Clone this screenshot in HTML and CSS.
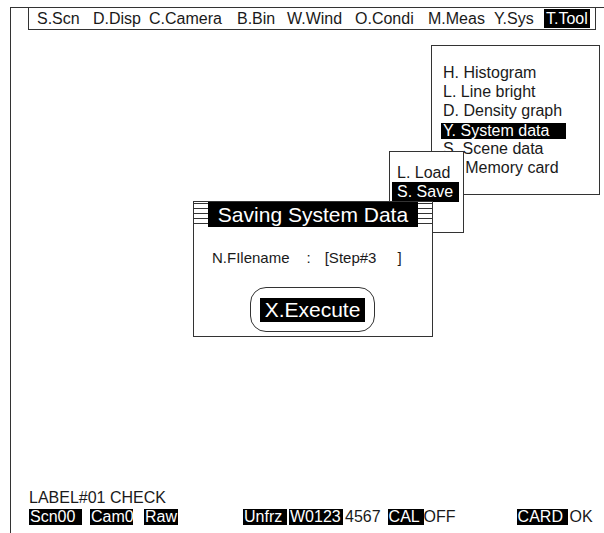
FILE: index.html
```html
<!DOCTYPE html>
<html lang="en">
<head>
    <meta charset="UTF-8">
    <title>Saving System Data</title>
    <link rel="stylesheet" href="styles.css">
</head>
<body>
    <div class="screen">
        <div class="topline">
            <div class="menubar">
                <span>S.Scn</span>
                <span>D.Disp</span>
                <span>C.Camera</span>
                <span>B.Bin</span>
                <span>W.Wind</span>
                <span>O.Condi</span>
                <span>M.Meas</span>
                <span>Y.Sys</span>
                <span class="sel">T.Tool</span>
            </div>
        </div>

        <div class="status">
            <div class="label">LABEL#01 CHECK</div>
            <div class="row">
                <span class="hl scn">Scn00</span>
                <span class="hl cam">Cam0</span>
                <span class="hl raw">Raw</span>
                <span class="hl unfrz">Unfrz</span>
                <span class="hl win">W0123</span>
                <span class="plain win2">4567</span>
                <span class="hl cal">CAL</span>
                <span class="plain">OFF</span>
                <span class="hl card">CARD</span>
                <span class="plain ok">OK</span>
            </div>
        </div>
    </div>

    <!-- Tool menu -->
    <div class="tool-menu">
        <div class="item">H. Histogram</div>
        <div class="item">L. Line bright</div>
        <div class="item">D. Density graph</div>
        <div class="item"><span class="sel">Y. System data</span></div>
        <div class="item">S. Scene data</div>
        <div class="item">M. Memory card</div>
    </div>

    <!-- Load / Save submenu -->
    <div class="sub-menu">
        <div class="item"><span>L. Load</span></div>
        <div class="item"><span class="sel">S. Save</span></div>
    </div>

    <!-- Dialog -->
    <div class="dialog">
        <div class="dialog-title">
            <div class="stripes"></div>
            <div class="title-text">Saving System Data</div>
            <div class="stripes"></div>
        </div>
        <div class="filename">
            <span class="fn-label">N.FIlename</span>
            <span class="fn-colon">:</span>
            <span class="fn-value">[Step#3</span>
            <span class="fn-end">]</span>
        </div>
        <div class="exec-wrap">
            <div class="exec">
                <span class="exec-text">X.Execute</span>
            </div>
        </div>
    </div>
</body>
</html>
```

FILE: styles.css
```css
body {
    margin: 0;
    position: relative;
    width: 604px;
    height: 533px;
    overflow: hidden;
    background: #fff;
    color: #1a1a1a;
    font-family: "Liberation Sans", Arial, sans-serif;
    font-size: 16px;
}

.screen {
    margin: 7px 0 0 10px;
    height: 526px;
    border-left: 1px solid #333;
    display: flex;
    flex-direction: column;
    justify-content: space-between;
}

.topline {
    border-top: 1px solid #333;
    width: 593px;
}

.menubar {
    margin: -1px 0 0 17px;
    width: 558px;
    height: 21px;
    border: 1px solid #333;
    background: #fff;
    display: grid;
    grid-template-columns: 56px 56px 88px 50px 68px 73px 66px 49px auto;
    align-items: center;
    padding-left: 8px;
    line-height: 17px;
}
.menubar span {
    white-space: nowrap;
}
.menubar .sel {
    background: #000;
    color: #fff;
    justify-self: start;
    padding: 1px 2px;
    margin-left: 1px;
}

/* status lines at the bottom */
.status {
    padding: 0 0 8px 18px;
}
.status .label {
    line-height: 16px;
    margin-bottom: 3px;
}
.status .row {
    display: flex;
    align-items: center;
    line-height: 16px;
    white-space: nowrap;
}
.hl {
    background: #000;
    color: #fff;
    padding-left: 1px;
}
.scn { width: 52px; }
.cam { margin-left: 8px; width: 42px; }
.raw { margin-left: 11px; width: 33px; }
.unfrz { margin-left: 65px; width: 43px; }
.win { margin-left: 2px; width: 53px; }
.win2 { margin-left: 2px; }
.cal { margin-left: 7px; width: 35px; }
.card { margin-left: 61px; width: 50px; }
.ok { margin-left: 2px; }

/* tool menu */
.tool-menu {
    position: absolute;
    left: 431px;
    top: 45px;
    width: 167px;
    height: 131px;
    border: 1px solid #333;
    background: #fff;
    padding-top: 17px;
}
.tool-menu .item {
    line-height: 19px;
    height: 19px;
    padding-left: 11px;
    white-space: nowrap;
}
.tool-menu .sel {
    display: inline-block;
    background: #000;
    color: #fff;
    width: 123px;
    padding-left: 2px;
    margin-left: -2px;
    line-height: 16px;
    vertical-align: middle;
}

/* load / save submenu */
.sub-menu {
    position: absolute;
    left: 389px;
    top: 151px;
    width: 73px;
    height: 69px;
    padding-top: 11px;
    border: 1px solid #333;
    background: #fff;
}
.sub-menu .item {
    height: 19px;
    line-height: 19px;
    padding-left: 2px;
}
.sub-menu .item span {
    display: inline-block;
    padding: 0 6px 0 5px;
    line-height: 20px;
}
.sub-menu .sel {
    background: #000;
    color: #fff;
}

/* dialog */
.dialog {
    position: absolute;
    left: 193px;
    top: 201px;
    width: 238px;
    height: 134px;
    border: 1px solid #333;
    background: #fff;
}
.dialog-title {
    display: flex;
    height: 25px;
}
.stripes {
    flex: 1;
    margin-top: 1px;
    background: repeating-linear-gradient(to bottom, #333 0, #333 1px, transparent 1px, transparent 5px);
}
.title-text {
    width: 210px;
    background: #000;
    color: #fff;
    font-size: 21px;
    line-height: 25px;
    text-align: center;
}
.filename {
    display: flex;
    font-size: 15px;
    line-height: 18px;
    margin-top: 22px;
    padding-left: 18px;
    white-space: nowrap;
}
.fn-colon { margin-left: 17px; }
.fn-value { margin-left: 14px; }
.fn-end { margin-left: 21px; }

.exec-wrap {
    display: flex;
    justify-content: center;
    margin-top: 20px;
    padding-right: 1px;
}
.exec {
    width: 123px;
    height: 43px;
    border: 1px solid #333;
    border-radius: 16px;
    display: flex;
    align-items: center;
    justify-content: center;
}
.exec-text {
    background: #000;
    color: #fff;
    font-size: 21px;
    line-height: 24px;
    width: 105px;
    text-align: center;
}
```
